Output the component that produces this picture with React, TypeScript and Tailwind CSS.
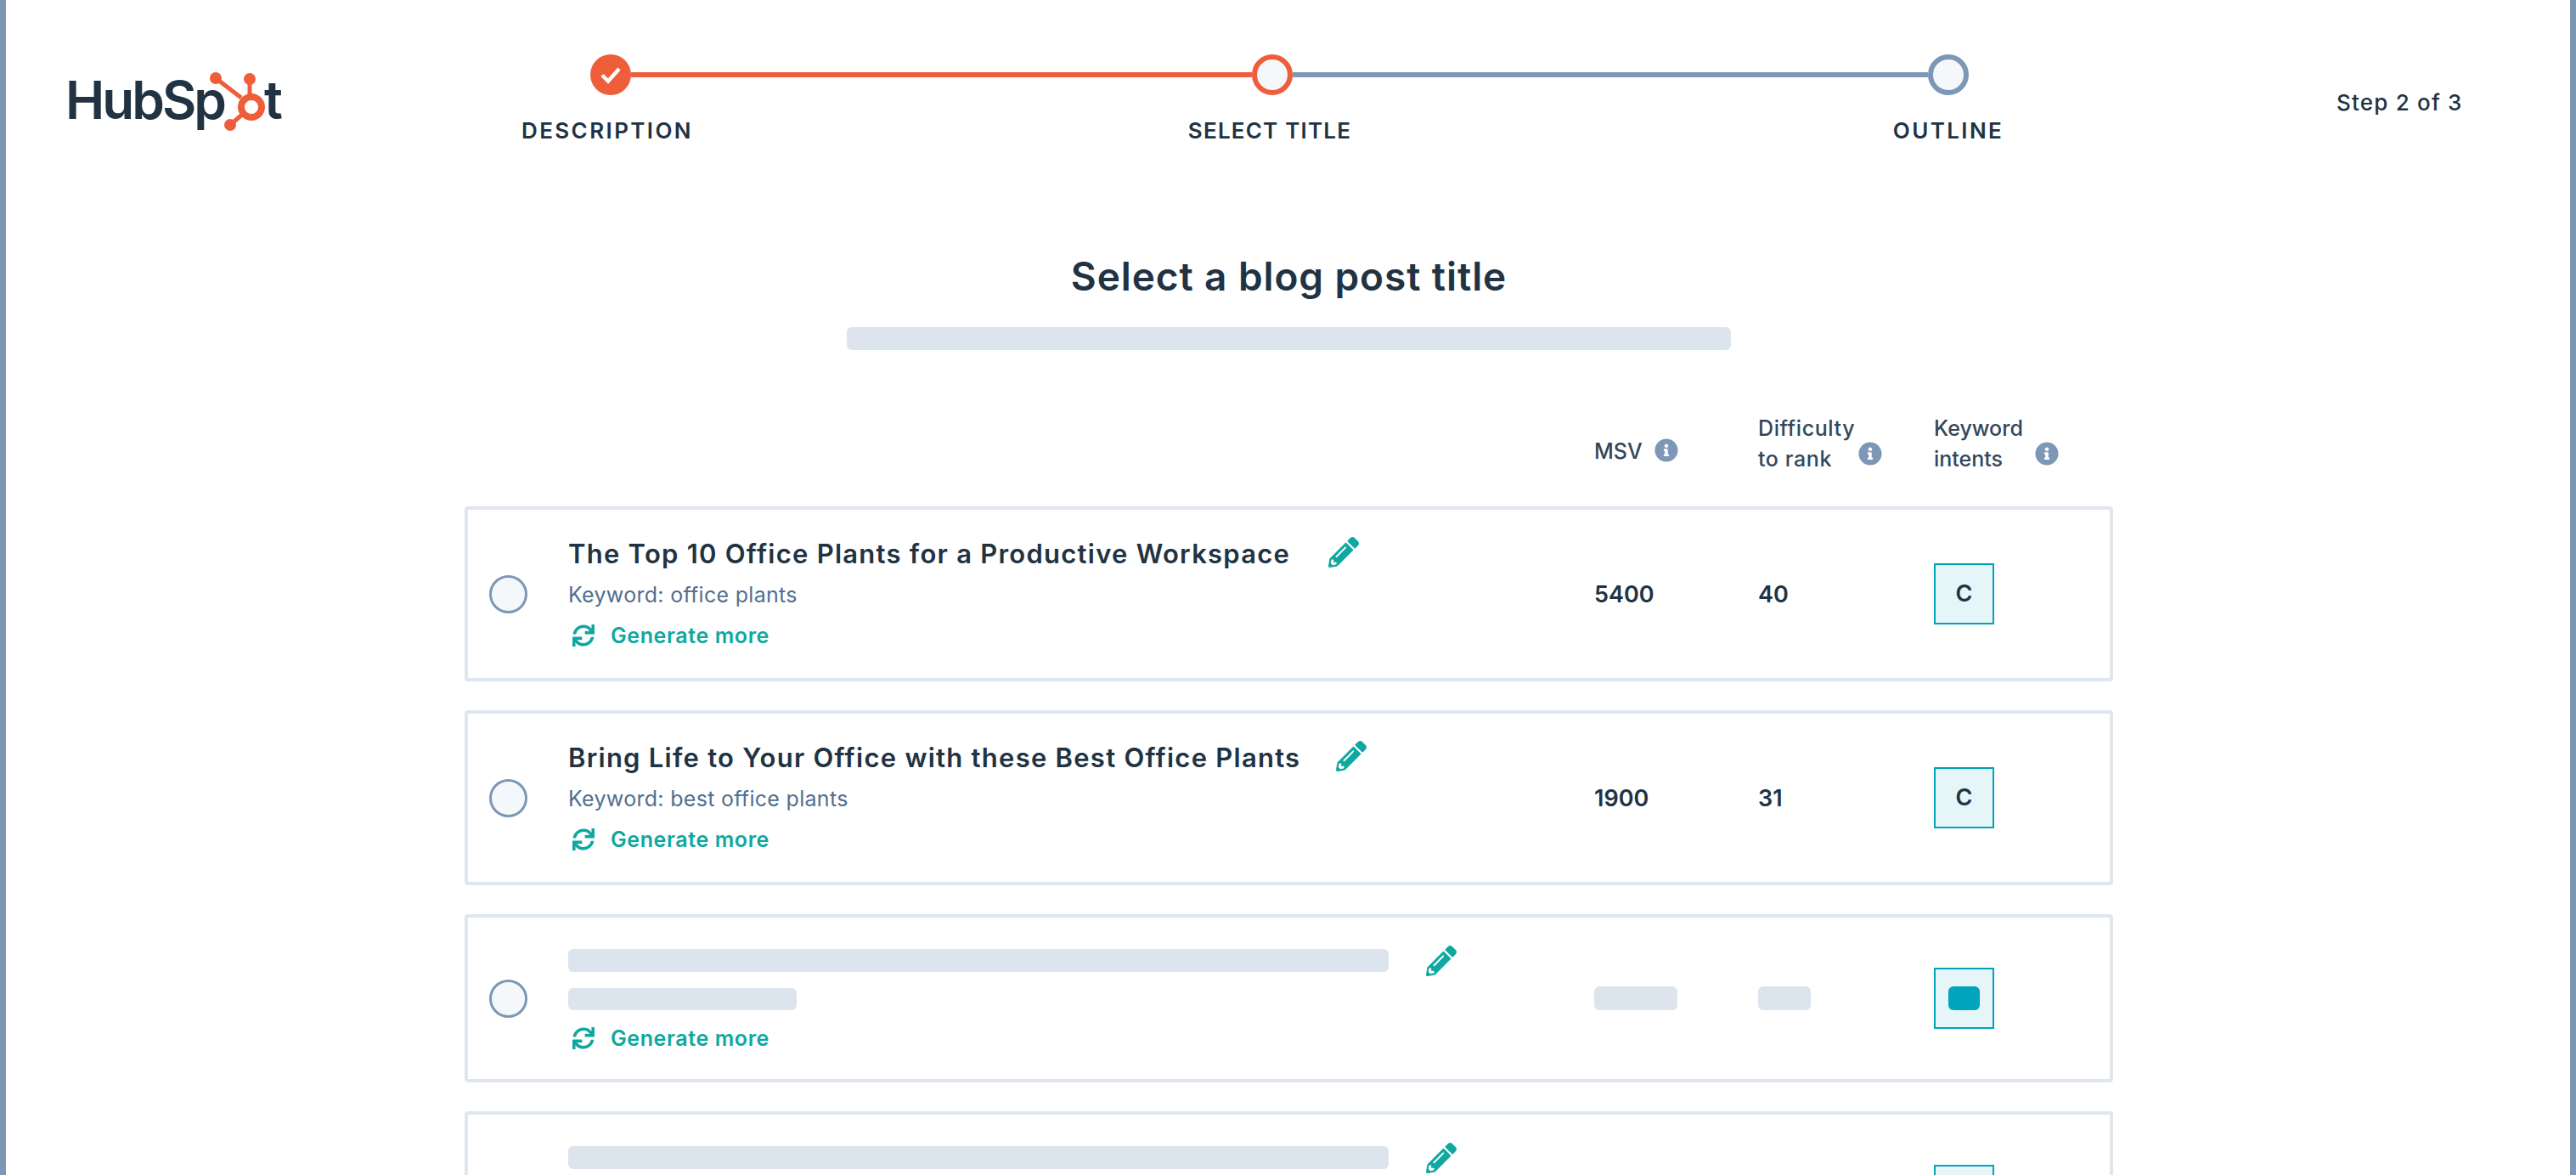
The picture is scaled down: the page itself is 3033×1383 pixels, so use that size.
import type { ReactNode } from "react";
import { FaPencilAlt, FaSync, FaInfoCircle } from "react-icons/fa";

const F = "font-['Inter','Noto_Sans',sans-serif]";

function Sprocket() {
  return (
    <svg width="70" height="72" viewBox="0 0 70 72" className="shrink-0 mt-[5px] -ml-[19px] relative">
      <g fill="#ee5e3b" stroke="none">
        <circle cx="9" cy="8" r="7" />
        <circle cx="49" cy="9" r="7" />
        <circle cx="26" cy="63" r="7" />
      </g>
      <circle cx="51" cy="42" r="16" fill="#fff" />
      <g fill="none" stroke="#ee5e3b">
        <circle cx="51" cy="42" r="12" strokeWidth="8" />
        <path d="M9 8 L39 31" strokeWidth="5" />
        <path d="M49 9 L49 28" strokeWidth="5" />
        <path d="M26 63 L41 50" strokeWidth="5" />
      </g>
    </svg>
  );
}

function Logo() {
  return (
    <div className={`w-[253px] h-[72px] flex items-start text-[#213343] text-[62px] leading-[72px] font-semibold tracking-[-3px] ${F}`}>
      <span className="mt-[3px]">HubSp</span>
      <Sprocket />
      <span className="mt-[3px] -ml-[4px]">t</span>
    </div>
  );
}

function Stepper() {
  return (
    <div className="w-[1879px] shrink-0">
      <div className="flex items-center pl-[130px] pr-[126px]">
        <div className="w-[48px] h-[48px] rounded-full bg-[#ee5e3b] flex items-center justify-center shrink-0">
          <svg width="26" height="22" viewBox="0 0 26 22"><path d="M3 11.5 L10 18.5 L23 4" fill="none" stroke="#fff" strokeWidth="4.5" /></svg>
        </div>
        <div className="w-[731px] h-[6px] bg-[#ee5e3b]" />
        <div className="w-[48px] h-[48px] rounded-full bg-[#f5f8fa] border-[6px] border-[#ee5e3b] shrink-0" />
        <div className="flex-1 h-[6px] bg-[#7c98b6]" />
        <div className="w-[48px] h-[48px] rounded-full bg-[#f5f8fa] border-[6px] border-[#7c98b6] shrink-0" />
      </div>
      <div className={`flex mt-[24px] text-[#213343] text-[26px] leading-[36px] font-semibold ${F}`}>
        <div className="w-[300px] text-center tracking-[2.4px]">DESCRIPTION</div>
        <div className="w-[300px] text-center ml-[480px] tracking-[1.2px]">SELECT TITLE</div>
        <div className="w-[300px] text-center ml-[499px] tracking-[2.4px]">OUTLINE</div>
      </div>
    </div>
  );
}

function HeaderCell({ lines, w, iconClass, textClass }: { lines: string[]; w: string; iconClass: string; textClass: string }) {
  return (
    <div className={`${w} flex items-end ${textClass}`}>
      <div className="leading-[36px]">
        {lines.map((l) => (
          <div key={l}>{l}</div>
        ))}
      </div>
      <FaInfoCircle className={`text-[#7c98b6] text-[28px] ${iconClass}`} />
    </div>
  );
}

function Radio() {
  return <div className="w-[45px] h-[45px] rounded-full border-[3px] border-[#7c98b6] bg-[#f5f8fa] shrink-0" />;
}

function Generate() {
  return (
    <div className={`flex items-center text-[#0ea8a0] text-[25px] leading-[32px] font-semibold tracking-[0.6px] ${F}`}>
      <FaSync className="text-[26px] ml-[5px] mr-[19px]" />
      Generate more
    </div>
  );
}

function Badge({ children }: { children: ReactNode }) {
  return (
    <div className={`w-[71px] h-[72px] bg-[#e5f5f8] border-2 border-[#00a4bd] flex items-center justify-center text-[27px] font-semibold text-[#213343] ${F}`}>
      {children}
    </div>
  );
}

function RealCard({ title, keyword, msv, diff, gap }: { title: string; keyword: string; msv: string; diff: string; gap: string }) {
  return (
    <div className={`h-[206px] border-[4px] border-[#dfe6ee] rounded-[4px] flex items-center pl-[25px] text-[#213343] ${F}`}>
      <Radio />
      <div className="ml-[48px] w-[1209px] mb-[2px]">
        <div className="flex items-center h-[38px]">
          <div className="text-[31px] leading-[38px] font-semibold tracking-[1.25px]">{title}</div>
          <FaPencilAlt className={`text-[#0ea8a0] text-[36px] -mt-[3px] ${gap}`} />
        </div>
        <div className="mt-[11px] text-[25px] leading-[36px] text-[#516f90] tracking-[0.3px]">{keyword}</div>
        <div className="mt-[14px]"><Generate /></div>
      </div>
      <div className="w-[193px] -ml-[1px] mr-[1px] pt-[2px] text-[27px] font-semibold">{msv}</div>
      <div className="w-[206px] -ml-[1px] mr-[1px] pt-[2px] text-[27px] font-semibold">{diff}</div>
      <Badge>C</Badge>
    </div>
  );
}

function SkeletonCard({ clip }: { clip?: boolean }) {
  return (
    <div className="h-[198px] shrink-0 border-[4px] border-[#dfe6ee] rounded-[4px] flex items-center pl-[25px]">
      <Radio />
      <div className="ml-[48px] w-[1209px]">
        <div className="flex items-start">
          <div className="w-[966px] h-[27px] mt-[4px] rounded-[6px] bg-[#dce4ed]" />
          <FaPencilAlt className="text-[#0ea8a0] text-[36px] ml-[44px]" />
        </div>
        <div className="w-[269px] h-[26px] mt-[14px] rounded-[6px] bg-[#dce4ed]" />
        <div className="mt-[17px] h-[32px]">{clip ? null : <Generate />}</div>
      </div>
      <div className="w-[193px] -ml-[1px] mr-[1px]"><div className="w-[98px] h-[28px] rounded-[6px] bg-[#dce4ed]" /></div>
      <div className="w-[206px] -ml-[1px] mr-[1px]"><div className="w-[62px] h-[28px] rounded-[6px] bg-[#dce4ed]" /></div>
      <Badge><div className="w-[37px] h-[28px] rounded-[6px] bg-[#00a4bd]" /></Badge>
    </div>
  );
}

export default function App() {
  return (
    <div className="w-[3033px] h-[1383px] overflow-hidden bg-white border-l-[7px] border-r-[7px] border-[#7c98b6]">
      <div className={`flex pt-[64px] pl-[70px] ${F}`}>
        <div className="mt-[15px] shrink-0"><Logo /></div>
        <div className="ml-[235px] shrink-0"><Stepper /></div>
        <div className="ml-[307px] mt-[39px] text-[26px] leading-[36px] font-medium text-[#213343] whitespace-nowrap tracking-[1.2px]">Step 2 of 3</div>
      </div>

      <div className="ml-[540px] w-[1941px]">
        <div className={`mt-[123px] text-center text-[46px] leading-[60px] font-semibold tracking-[0.9px] text-[#213343] ${F}`}>Select a blog post title</div>
        <div className="mx-auto mt-[30px] w-[1041px] h-[27px] rounded-[6px] bg-[#dce4ed]" />
        <div className={`flex items-end h-[184px] pb-[38px] pl-[1330px] text-[25px] font-medium text-[#33475b] ${F}`}>
          <HeaderCell lines={["MSV"]} w="w-[193px] mb-[9px]" textClass="" iconClass="ml-[14px] mb-[5px]" />
          <HeaderCell lines={["Difficulty", "to rank"]} w="w-[207px]" textClass="tracking-[0.6px]" iconClass="ml-[4px] mb-[10px]" />
          <HeaderCell lines={["Keyword", "intents"]} w="w-[210px]" textClass="" iconClass="ml-[14px] mb-[10px]" />
        </div>
        <div className="flex flex-col gap-[34px]">
          <RealCard title="The Top 10 Office Plants for a Productive Workspace" keyword="Keyword: office plants" msv="5400" diff="40" gap="ml-[45px]" />
          <RealCard title="Bring Life to Your Office with these Best Office Plants" keyword="Keyword: best office plants" msv="1900" diff="31" gap="ml-[42px]" />
          <SkeletonCard />
          <SkeletonCard clip />
        </div>
      </div>
    </div>
  );
}
